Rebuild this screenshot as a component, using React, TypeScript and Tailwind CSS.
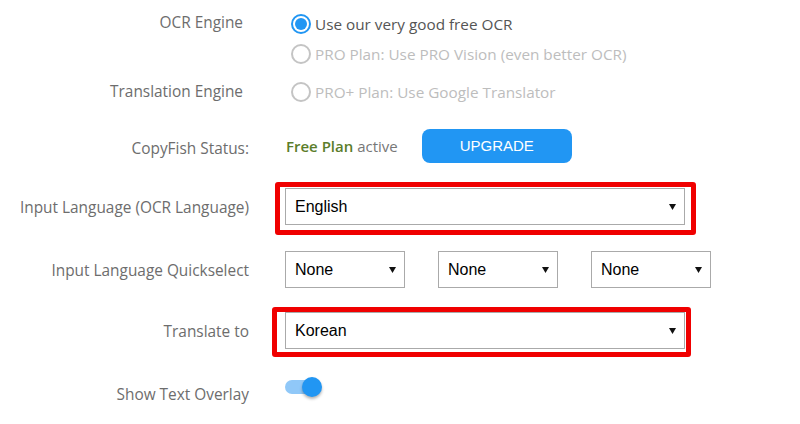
import React from "react";

const Label = ({ text, className = "" }: { text: string; className?: string }) => (
  <div className={"w-[249px] shrink-0 text-right text-[15.4px] text-[#6d6d6d] " + className}>{text}</div>
);

const Arrow = () => (
  <svg width="7" height="6" viewBox="0 0 7 6" className="shrink-0">
    <path d="M0 0 H7 L3.5 6 Z" fill="#111" />
  </svg>
);

const FakeSelect = ({ value, width }: { value: string; width: string }) => (
  <div
    className={
      "flex h-[37px] items-center justify-between border border-[#aaaaaa] bg-white pl-[9px] pr-[8px] text-[16px] text-black " +
      width
    }
    style={{ fontFamily: '"Liberation Sans", Arial, sans-serif' }}
  >
    <span>{value}</span>
    <Arrow />
  </div>
);

const Radio = ({ checked, disabled, text }: { checked?: boolean; disabled?: boolean; text: string }) => (
  <div className="flex h-[30px] items-center">
    <span
      className={
        "mr-[4px] ml-[6px] flex h-[20px] w-[20px] items-center justify-center rounded-full border-2 " +
        (checked ? "border-[#2196f3]" : "border-[#c4c4c4]")
      }
    >
      {checked && <span className="h-[12px] w-[12px] rounded-full bg-[#2196f3]" />}
    </span>
    <span className={"text-[15.3px] " + (disabled ? "text-[#bdbdbd]" : "text-[#555]")}>{text}</span>
  </div>
);

export default function App() {
  return (
    <div
      className="h-[424px] w-[800px] overflow-hidden bg-white"
      style={{ fontFamily: '"Open Sans", "Noto Sans", sans-serif' }}
    >
      <div className="flex flex-col">
        {/* OCR engine */}
        <div className="flex pt-[9px]">
          <Label text="OCR Engine" className="pr-[6px] leading-[27px]" />
          <div className="ml-[36px] flex flex-col">
            <Radio checked text="Use our very good free OCR" />
            <Radio disabled text="PRO Plan: Use PRO Vision (even better OCR)" />
          </div>
        </div>

        {/* translation engine */}
        <div className="mt-[8px] flex items-center">
          <Label text="Translation Engine" className="-mt-[1px] pr-[6px]" />
          <div className="ml-[36px]">
            <Radio disabled text="PRO+ Plan: Use Google Translator" />
          </div>
        </div>

        {/* status */}
        <div className="mt-[22px] flex h-[34px] items-center">
          <Label text="CopyFish Status:" className="pt-[5px]" />
          <div className="ml-[37px] text-[15px] text-[#777]">
            <span className="font-semibold text-[#5b7d2a]">Free Plan</span> active
          </div>
          <button
            className="ml-[24px] h-[34px] w-[150px] rounded-[8px] bg-[#2196f3] text-[15px] text-white"
            style={{ fontFamily: '"Liberation Sans", Arial, sans-serif' }}
          >
            UPGRADE
          </button>
        </div>

        {/* input language */}
        <div className="mt-[25px] flex items-center">
          <Label text="Input Language (OCR Language)" className="pt-[2px]" />
          <div className="relative ml-[36px]">
            <FakeSelect value="English" width="w-[400px]" />
            <div className="pointer-events-none absolute -top-[6px] -right-[11px] -bottom-[10px] -left-[10px] rounded-[3px] border-[5px] border-[#f00000]" />
          </div>
        </div>

        {/* quickselect */}
        <div className="mt-[26px] flex items-center">
          <Label text="Input Language Quickselect" className="pt-[2px]" />
          <div className="ml-[36px] flex gap-[33px]">
            <FakeSelect value="None" width="w-[120px]" />
            <FakeSelect value="None" width="w-[120px]" />
            <FakeSelect value="None" width="w-[120px]" />
          </div>
        </div>

        {/* translate to */}
        <div className="mt-[24px] flex items-center">
          <Label text="Translate to" className="pt-[3px]" />
          <div className="relative ml-[36px]">
            <FakeSelect value="Korean" width="w-[400px]" />
            <div className="pointer-events-none absolute -top-[5px] -right-[6px] -bottom-[8px] -left-[13px] rounded-[3px] border-[5px] border-[#f00000]" />
          </div>
        </div>

        {/* overlay toggle */}
        <div className="mt-[34px] flex items-center">
          <Label text="Show Text Overlay" />
          <div className="relative ml-[36px] -mt-[16px] h-[20px] w-[36px]">
            <div className="absolute top-[3px] left-0 h-[14px] w-[34px] rounded-full bg-[#90c8f8]" />
            <div className="absolute top-0 left-[17px] h-[20px] w-[20px] rounded-full bg-[#2196f3] shadow-[0_2px_3px_rgba(0,0,0,0.3)]" />
          </div>
        </div>
      </div>
    </div>
  );
}
